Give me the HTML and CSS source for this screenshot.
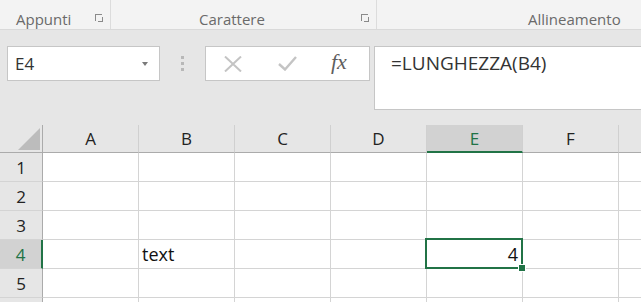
FILE: index.html
```html
<!doctype html>
<html>

<head>
	<link rel="stylesheet" href="styles.css">
</head>

<body>
	<div class="ribbon">
		<div class="group first">
			<span class="glabel">Appunti</span>
			<span class="launch"></span>
		</div>
		<div class="group second">
			<span class="glabel">Carattere</span>
			<span class="launch"></span>
		</div>
		<div class="group third">
			<span class="glabel">Allineamento</span>
		</div>
	</div>

	<div class="fbar">
		<div class="namebox">
			<span>E4</span>
			<span class="caret"></span>
		</div>
		<div class="dots"><i></i><i></i><i></i></div>
		<div class="btns">
			<svg width="18" height="16" viewBox="0 0 18 16">
				<path d="M1 0.5 L17 15.5 M17 0.5 L1 15.5" stroke="#c4c4c4" stroke-width="2" fill="none" />
			</svg>
			<svg width="19" height="15" viewBox="0 0 19 15">
				<path d="M1 8 L7 13.5 L18 1" stroke="#c4c4c4" stroke-width="2.4" fill="none" />
			</svg>
			<span class="fx">fx</span>
		</div>
		<div class="formula">=LUNGHEZZA(B4)</div>
	</div>

	<div class="sheetwrap">
		<table class="sheet">
			<tr class="head">
				<th class="corner"><div class="tri"></div></th>
				<th>A</th>
				<th>B</th>
				<th>C</th>
				<th>D</th>
				<th class="sel">E</th>
				<th>F</th>
				<th class="rest"></th>
			</tr>
			<tr>
				<th class="num">1</th>
				<td></td><td></td><td></td><td></td><td></td><td></td><td></td>
			</tr>
			<tr>
				<th class="num">2</th>
				<td></td><td></td><td></td><td></td><td></td><td></td><td></td>
			</tr>
			<tr>
				<th class="num">3</th>
				<td></td><td></td><td></td><td></td><td></td><td></td><td></td>
			</tr>
			<tr>
				<th class="num sel">4</th>
				<td></td><td>text</td><td></td><td></td><td class="active">4<span class="handle"></span></td><td></td><td></td>
			</tr>
			<tr>
				<th class="num">5</th>
				<td></td><td></td><td></td><td></td><td></td><td></td><td></td>
			</tr>
			<tr>
				<th class="num"></th>
				<td></td><td></td><td></td><td></td><td></td><td></td><td></td>
			</tr>
		</table>
	</div>
</body>

</html>
```

FILE: styles.css
```css
body {
	margin: 0;
	background: #e6e6e6;
	font-family: "Open Sans", "Noto Sans", sans-serif;
	width: 641px;
	height: 302px;
	overflow: hidden;
}

/* ribbon group labels */
.ribbon {
	display: flex;
	height: 29px;
	background: #f3f3f3;
	border-bottom: 1px solid #d9d9d9;
}

.group {
	display: flex;
	align-items: center;
	padding-top: 8px;
	box-sizing: border-box;
	border-right: 1px solid #dcdcdc;
}

.group.first {
	width: 111px;
	padding-left: 16px;
}

.group.second {
	width: 266px;
	padding-left: 88px;
}

.group.third {
	flex: 1;
	border-right: none;
	padding-left: 151px;
}

.glabel {
	font-size: 15px;
	color: #6a6a6a;
}

.launch {
	width: 6px;
	height: 6px;
	border-left: 1px solid #8a8a8a;
	border-top: 1px solid #8a8a8a;
	margin-left: auto;
	margin-right: 8px;
	margin-top: -2px;
	position: relative;
}

.launch::after {
	content: "";
	position: absolute;
	left: 2px;
	top: 2px;
	width: 4px;
	height: 4px;
	border-right: 1px solid #8a8a8a;
	border-bottom: 1px solid #8a8a8a;
}

/* formula bar */
.fbar {
	display: flex;
	align-items: flex-start;
	height: 95px;
	padding: 16px 0 0 7px;
	box-sizing: border-box;
	overflow: hidden;
}

.namebox {
	width: 153px;
	height: 35px;
	box-sizing: border-box;
	background: #fff;
	border: 1px solid #c6c6c6;
	display: flex;
	align-items: center;
	padding: 0 0 0 7px;
	font-size: 17px;
	color: #333;
}

.caret {
	margin-left: auto;
	margin-right: 11px;
	border-left: 3.5px solid transparent;
	border-right: 3.5px solid transparent;
	border-top: 4px solid #7a7a7a;
}

.dots {
	width: 45px;
	height: 35px;
	display: flex;
	flex-direction: column;
	align-items: center;
	justify-content: center;
	gap: 3px;
}

.dots i {
	width: 3px;
	height: 3px;
	background: #b8b8b8;
}

.btns {
	width: 165px;
	height: 35px;
	box-sizing: border-box;
	background: #fff;
	border: 1px solid #c6c6c6;
	display: flex;
	align-items: center;
	padding-left: 18px;
	gap: 36px;
}

.fx {
	font-family: "Liberation Serif", serif;
	font-style: italic;
	font-size: 22px;
	color: #5e5e5e;
	margin-left: -2px;
	margin-top: -3px;
}

.formula {
	margin-left: 4px;
	flex: 1;
	height: 64px;
	box-sizing: border-box;
	background: #fff;
	border: 1px solid #c6c6c6;
	border-right: none;
	padding: 3px 0 0 16px;
	font-size: 19px;
	color: #333;
}

/* grid */
.sheetwrap {
	width: 641px;
	overflow: hidden;
}

.sheet {
	border-collapse: separate;
	border-spacing: 0;
	background: #fff;
	table-layout: fixed;
	width: 641px;
	font-size: 17px;
}

.sheet th,
.sheet td {
	padding: 0;
	height: 28px;
	border-right: 1px solid #d4d4d4;
	border-bottom: 1px solid #d4d4d4;
	box-sizing: content-box;
}

.sheet td {
	width: 95px;
	padding-left: 3px;
	box-sizing: border-box;
	color: #111;
	font-size: 18px;
}

.head th {
	background: #e6e6e6;
	font-weight: normal;
	color: #222;
	height: 27px;
	border-bottom: 1px solid #ababab;
	border-right: 1px solid #d0d0d0;
	width: 95px;
}

.head th.corner {
	width: 42px;
	border-right: 1px solid #ababab;
}

.head th.rest {
	border-right: none;
}

.tri {
	width: 0;
	height: 0;
	border-left: 22px solid transparent;
	border-bottom: 22px solid #bcbcbc;
	margin: 3px 2px 2px auto;
}

.head th.sel {
	background: #d2d2d2;
	color: #217346;
	border-bottom: 2px solid #217346;
	height: 26px;
}

.sheet th.num {
	background: #e6e6e6;
	font-weight: normal;
	color: #222;
	border-right: 1px solid #ababab;
	text-align: center;
}

.sheet th.num.sel {
	background: #d2d2d2;
	color: #217346;
	border-right: 2px solid #217346;
}

.sheet td.active {
	position: relative;
	text-align: right;
	padding-right: 4px;
}

.sheet td.active::after {
	content: "";
	position: absolute;
	left: -2px;
	top: -2px;
	right: -1px;
	bottom: -1px;
	border: 2px solid #217346;
}

.handle {
	position: absolute;
	right: -4px;
	bottom: -4px;
	width: 6px;
	height: 6px;
	background: #217346;
	border: 1px solid #fff;
	z-index: 1;
}
```
